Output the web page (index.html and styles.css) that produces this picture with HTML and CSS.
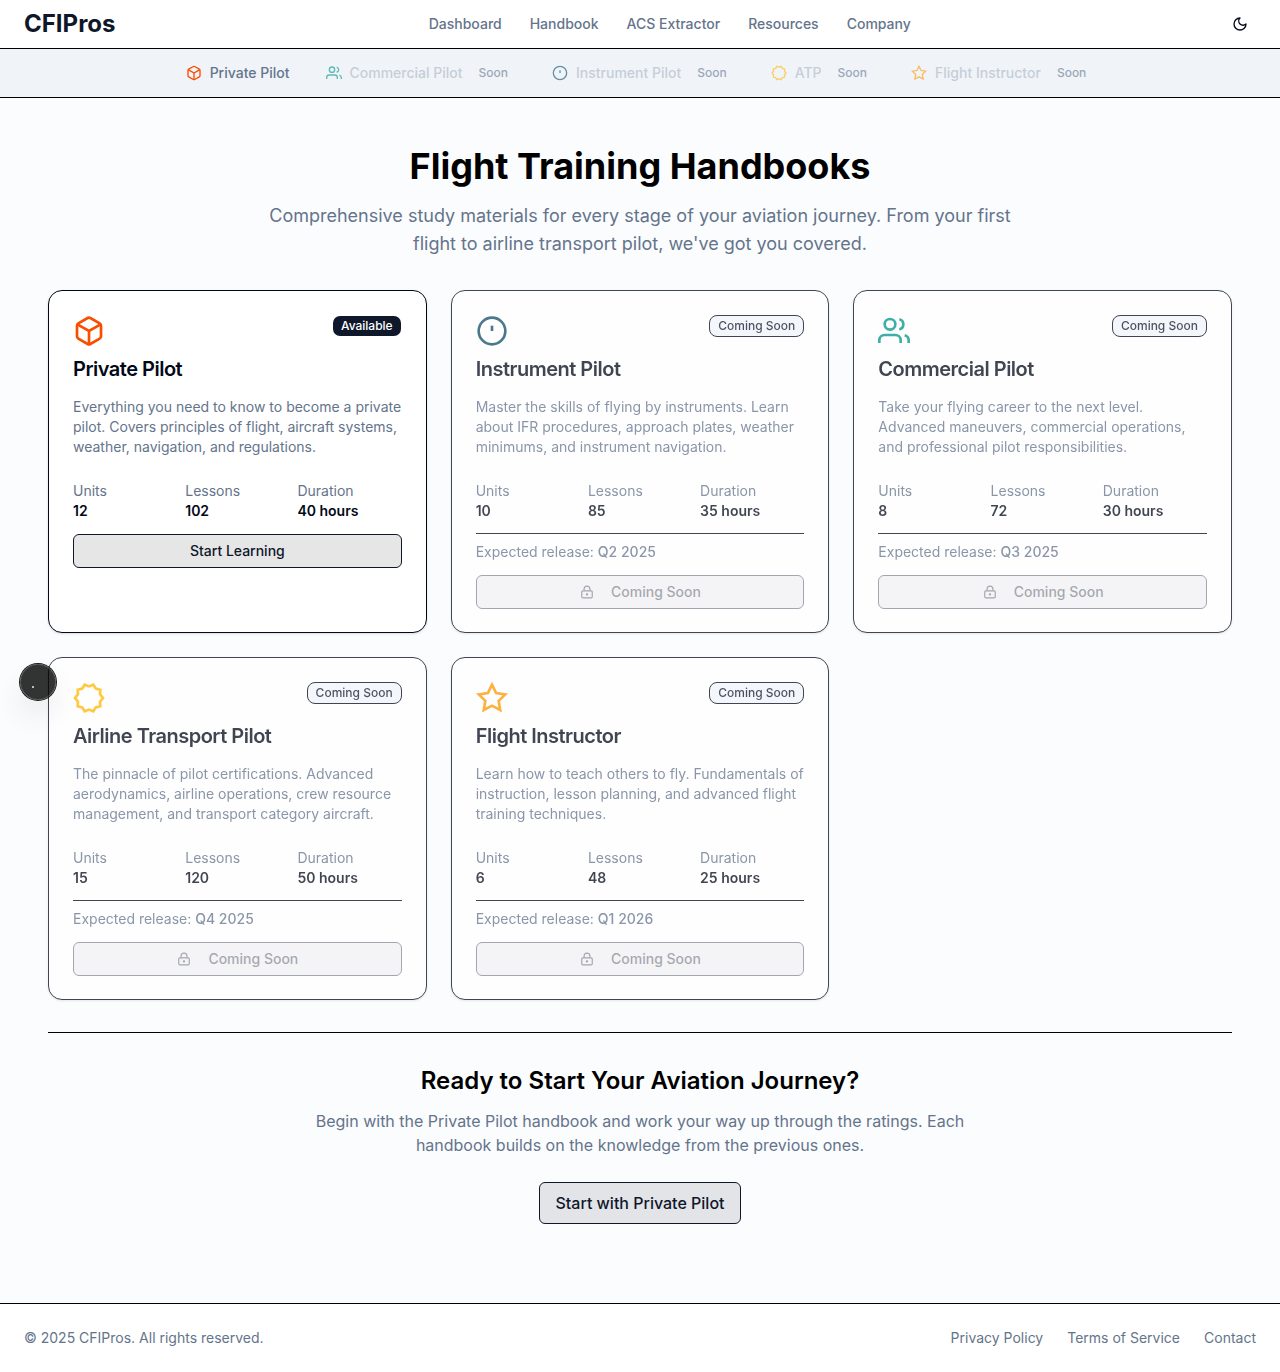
FILE: index.html
```
<!DOCTYPE html>
<html lang="en">
<head>
<meta charset="utf-8">
<title>CFIPros - Flight Training Handbooks</title>
<link rel="stylesheet" href="styles.css">
</head>
<body>
<svg class="sprite" aria-hidden="true">
  <symbol id="box" viewBox="0 0 24 24"><path d="M21 16V8a2 2 0 0 0-1-1.73l-7-4a2 2 0 0 0-2 0l-7 4A2 2 0 0 0 3 8v8a2 2 0 0 0 1 1.73l7 4a2 2 0 0 0 2 0l7-4A2 2 0 0 0 21 16z"/><path d="M3.27 6.96 12 12.01l8.73-5.05M12 22.08V12"/></symbol>
  <symbol id="users" viewBox="0 0 24 24"><path d="M17 21v-2a4 4 0 0 0-4-4H5a4 4 0 0 0-4 4v2"/><circle cx="9" cy="7" r="4"/><path d="M23 21v-2a4 4 0 0 0-3-3.87M16 3.13a4 4 0 0 1 0 7.75"/></symbol>
  <symbol id="gauge" viewBox="0 0 24 24"><circle cx="12" cy="12" r="10"/><path d="M12 8v4"/></symbol>
  <symbol id="seal" viewBox="0 0 24 24"><path d="M22.5 12 20.27 14.69 20.49 18.17 17.11 19.04 15.24 21.99 12 20.7 8.76 21.99 6.89 19.04 3.51 18.17 3.73 14.69 1.5 12 3.73 9.31 3.51 5.83 6.89 4.96 8.76 2.01 12 3.3 15.24 2.01 17.11 4.96 20.49 5.83 20.27 9.31z"/></symbol>
  <symbol id="star" viewBox="0 0 24 24"><path d="m12 2 3.09 6.26L22 9.27l-5 4.87 1.18 6.88L12 17.77l-6.18 3.25L7 14.14 2 9.27l6.91-1.01z"/></symbol>
  <symbol id="lock" viewBox="0 0 24 24"><rect x="3" y="10" width="18" height="12" rx="2"/><path d="M7 10V7a5 5 0 0 1 10 0v3"/><circle cx="12" cy="16" r="1"/></symbol>
</svg>
<header class="topbar">
  <a class="brand">CFIPros</a>
  <nav class="mainnav"><a>Dashboard</a><a>Handbook</a><a>ACS Extractor</a><a>Resources</a><a>Company</a></nav>
  <button class="theme" aria-label="Toggle theme"><svg class="moon" viewBox="0 0 24 24"><path d="M12 3a6 6 0 0 0 9 9 9 9 0 1 1-9-9Z"/></svg></button>
</header>
<nav class="subnav">
  <a class="course"><svg class="orange"><use href="#box"/></svg><span>Private Pilot</span></a>
  <a class="course soon"><svg class="teal"><use href="#users"/></svg><span>Commercial Pilot</span><small>Soon</small></a>
  <a class="course soon"><svg class="blue"><use href="#gauge"/></svg><span>Instrument Pilot</span><small>Soon</small></a>
  <a class="course soon"><svg class="yellow"><use href="#seal"/></svg><span>ATP</span><small>Soon</small></a>
  <a class="course soon"><svg class="amber"><use href="#star"/></svg><span>Flight Instructor</span><small>Soon</small></a>
</nav>
<main>
  <section class="hero">
    <h1>Flight Training Handbooks</h1>
    <p>Comprehensive study materials for every stage of your aviation journey. From your first flight to airline transport pilot, we've got you covered.</p>
  </section>
  <section class="grid">
    <article class="card">
      <div class="cardtop"><svg class="orange"><use href="#box"/></svg><span class="badge available">Available</span></div>
      <h3>Private Pilot</h3>
      <p class="desc">Everything you need to know to become a private pilot. Covers principles of flight, aircraft systems, weather, navigation, and regulations.</p>
      <dl><div><dt>Units</dt><dd>12</dd></div><div><dt>Lessons</dt><dd>102</dd></div><div><dt>Duration</dt><dd>40 hours</dd></div></dl>
      <button class="btn">Start Learning</button>
    </article>
    <article class="card upcoming">
      <div class="cardtop"><svg class="blue"><use href="#gauge"/></svg><span class="badge">Coming Soon</span></div>
      <h3>Instrument Pilot</h3>
      <p class="desc">Master the skills of flying by instruments. Learn about IFR procedures, approach plates, weather minimums, and instrument navigation.</p>
      <dl><div><dt>Units</dt><dd>10</dd></div><div><dt>Lessons</dt><dd>85</dd></div><div><dt>Duration</dt><dd>35 hours</dd></div></dl>
      <p class="release">Expected release: <b>Q2 2025</b></p>
      <button class="btn" disabled><svg><use href="#lock"/></svg>Coming Soon</button>
    </article>
    <article class="card upcoming">
      <div class="cardtop"><svg class="teal"><use href="#users"/></svg><span class="badge">Coming Soon</span></div>
      <h3>Commercial Pilot</h3>
      <p class="desc">Take your flying career to the next level. Advanced maneuvers, commercial operations, and professional pilot responsibilities.</p>
      <dl><div><dt>Units</dt><dd>8</dd></div><div><dt>Lessons</dt><dd>72</dd></div><div><dt>Duration</dt><dd>30 hours</dd></div></dl>
      <p class="release">Expected release: <b>Q3 2025</b></p>
      <button class="btn" disabled><svg><use href="#lock"/></svg>Coming Soon</button>
    </article>
    <article class="card upcoming">
      <div class="cardtop"><svg class="yellow"><use href="#seal"/></svg><span class="badge">Coming Soon</span></div>
      <h3>Airline Transport Pilot</h3>
      <p class="desc">The pinnacle of pilot certifications. Advanced aerodynamics, airline operations, crew resource management, and transport category aircraft.</p>
      <dl><div><dt>Units</dt><dd>15</dd></div><div><dt>Lessons</dt><dd>120</dd></div><div><dt>Duration</dt><dd>50 hours</dd></div></dl>
      <p class="release">Expected release: <b>Q4 2025</b></p>
      <button class="btn" disabled><svg><use href="#lock"/></svg>Coming Soon</button>
    </article>
    <article class="card upcoming">
      <div class="cardtop"><svg class="amber"><use href="#star"/></svg><span class="badge">Coming Soon</span></div>
      <h3>Flight Instructor</h3>
      <p class="desc">Learn how to teach others to fly. Fundamentals of instruction, lesson planning, and advanced flight training techniques.</p>
      <dl><div><dt>Units</dt><dd>6</dd></div><div><dt>Lessons</dt><dd>48</dd></div><div><dt>Duration</dt><dd>25 hours</dd></div></dl>
      <p class="release">Expected release: <b>Q1 2026</b></p>
      <button class="btn" disabled><svg><use href="#lock"/></svg>Coming Soon</button>
    </article>
  </section>
  <section class="cta">
    <h2>Ready to Start Your Aviation Journey?</h2>
    <p>Begin with the Private Pilot handbook and work your way up through the ratings. Each handbook builds on the knowledge from the previous ones.</p>
    <button class="btn large">Start with Private Pilot</button>
  </section>
</main>
<footer class="footer">
  <span>© 2025 CFIPros. All rights reserved.</span>
  <nav><a>Privacy Policy</a><a>Terms of Service</a><a>Contact</a></nav>
</footer>
<div class="devtool"></div>
</body>
</html>
```
FILE: styles.css
```
* { box-sizing: border-box; margin: 0; padding: 0; }
body { font-family: Inter, sans-serif; font-size: 14px; line-height: 20px; color: #020817; background: #fbfcfe; }
button { font: inherit; }
svg { fill: none; stroke: currentColor; stroke-width: 2; flex: none; }
.sprite { position: absolute; width: 0; height: 0; }
.orange { color: #f94d00; }
.teal { color: #009689; }
.blue { color: #104e64; }
.yellow { color: #ffb900; }
.amber { color: #fe9a00; }

.topbar { height: 49px; padding: 0 24px; display: flex; justify-content: space-between; align-items: center; background: #fff; border-bottom: 1px solid #000; }
.brand { font-size: 24px; line-height: 32px; font-weight: 700; color: #0f172a; }
.mainnav { display: flex; gap: 28px; font-weight: 500; color: #64748b; }
.theme { width: 32px; height: 32px; display: flex; align-items: center; justify-content: center; border: 0; background: none; color: #020817; }
.moon { width: 16px; height: 16px; stroke-linecap: round; stroke-linejoin: round; }

.subnav { height: 49px; display: flex; align-items: center; justify-content: center; gap: 36px; background: #f0f4f9; border-bottom: 1px solid #000; font-weight: 500; color: #64748b; }
.course { display: flex; align-items: center; }
.course svg { width: 16px; height: 16px; margin-right: 8px; }
.course small { font-size: 12px; line-height: 16px; padding: 0 8px; margin-left: 8px; color: #64748b; opacity: .6; }
.course.soon svg { opacity: .6; }
.course.soon span { opacity: .3; }

main { padding: 48px 48px 79px; }
.hero { text-align: center; width: 768px; margin: 0 auto 32px; }
h1 { font-size: 36px; line-height: 40px; font-weight: 700; color: #000; margin-bottom: 16px; }
.hero p { font-size: 18px; line-height: 28px; color: #64748b; }
.grid { display: grid; grid-template-columns: repeat(3, 1fr); gap: 24px; }
.card { height: 343px; padding: 24px; display: flex; flex-direction: column; border: 1px solid #020817; border-radius: 14px; background: #fff; box-shadow: 0 1px 3px rgba(0, 0, 0, .1), 0 1px 2px -1px rgba(0, 0, 0, .1); }
.upcoming { opacity: .75; }
.cardtop { display: flex; justify-content: space-between; align-items: flex-start; height: 32px; margin-bottom: 8px; }
.cardtop svg { width: 32px; height: 32px; }
.badge { border: 1px solid #020817; border-radius: 8px; padding: 2px 8px; font-size: 12px; line-height: 16px; font-weight: 500; color: #0f172a; background: #f0f4f9; }
.badge.available { border-color: transparent; background: #0f172a; background-clip: padding-box; color: #fff; }
h3 { font-size: 20px; line-height: 28px; font-weight: 600; letter-spacing: -0.5px; margin-bottom: 14px; }
.desc { color: #64748b; margin-bottom: 24px; }
dl { display: grid; grid-template-columns: repeat(3, 1fr); gap: 8px; }
dt { color: #64748b; }
dd { font-weight: 600; }
.release { margin-top: 12px; border-top: 1px solid #020817; padding-top: 8px; color: #64748b; }
.release b { font-weight: 500; }
.btn { flex: none; margin-top: 13px; height: 34px; display: flex; align-items: center; justify-content: center; border: 1px solid #0f172a; border-radius: 6px; background: #e6e6e7; font-weight: 500; color: #0f172a; }
.btn svg { width: 14px; height: 14px; margin-right: 17px; }
.btn:disabled { padding-left: 1px; opacity: .5; }

.cta { margin-top: 32px; border-top: 1px solid #000; padding-top: 32px; text-align: center; display: flex; flex-direction: column; align-items: center; }
h2 { font-size: 24px; line-height: 32px; font-weight: 600; color: #000; margin-bottom: 12px; }
.cta p { width: 672px; font-size: 16px; line-height: 24px; color: #64748b; margin-bottom: 25px; }
.btn.large { margin: 0; height: 42px; padding: 0 15px; font-size: 16px; background: #e3e4e8; }

.footer { height: 69px; border-top: 1px solid #000; padding: 0 24px; display: flex; align-items: center; justify-content: space-between; background: #fff; color: #64748b; }
.footer nav { display: flex; gap: 24px; }
.devtool { position: absolute; left: 20px; top: 664px; width: 36px; height: 36px; border-radius: 50%; background: rgba(0, 0, 0, .8); box-shadow: 0 0 0 1px #171717, inset 0 0 0 1px rgba(255, 255, 255, .14), 0 16px 32px -8px rgba(0, 0, 0, .24); }
.devtool::after { content: ""; position: absolute; left: 12px; top: 22px; width: 2px; height: 2px; background: #bbb; }
```
